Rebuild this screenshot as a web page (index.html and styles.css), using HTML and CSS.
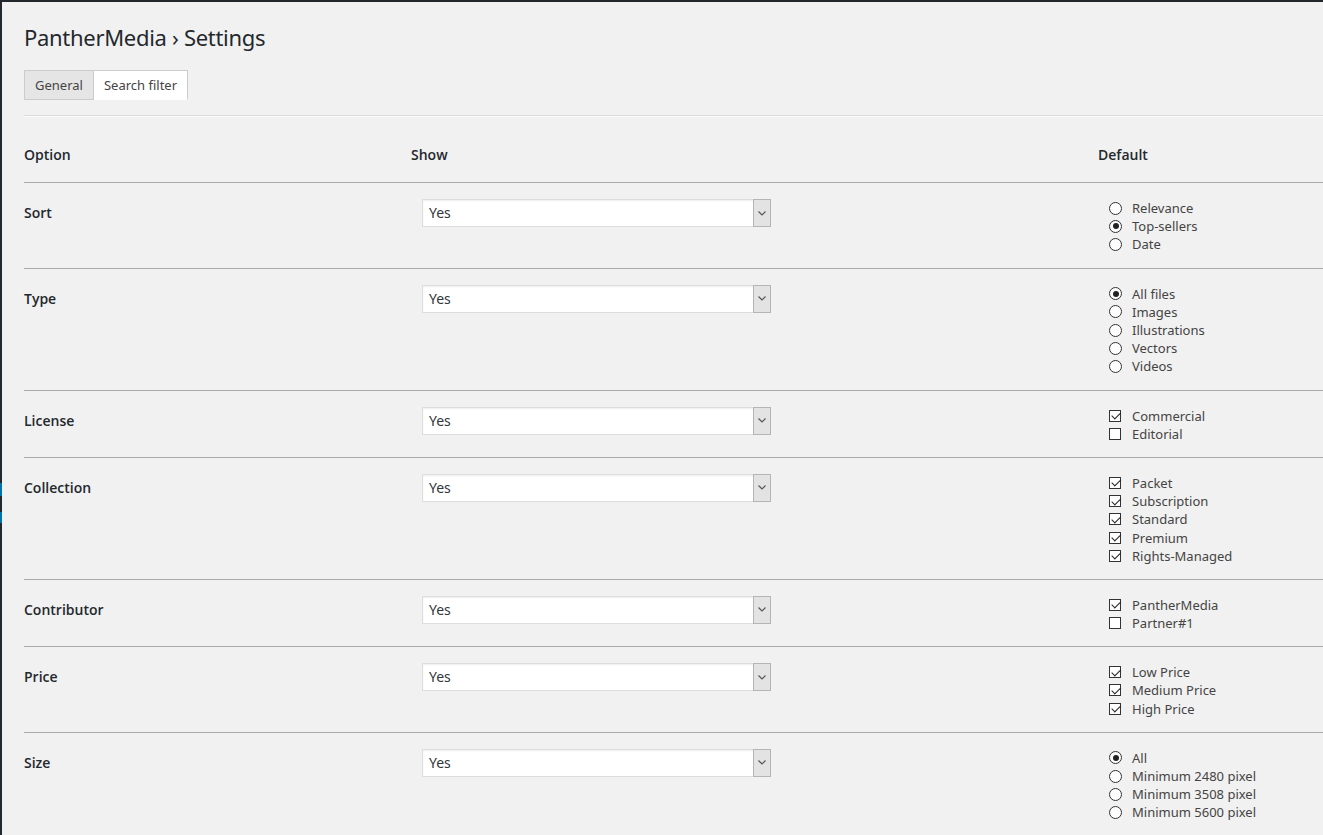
FILE: index.html
```html
<!DOCTYPE html>
<html lang="en">
<head>
  <meta charset="UTF-8" />
  <title>PantherMedia › Settings</title>
  <link rel="stylesheet" href="styles.css">
</head>
<body>

<div class="frame">
  <span class="edge-mark edge-mark-a"></span>
  <span class="edge-mark edge-mark-b"></span>

  <div class="wrap">
    <h1>PantherMedia › Settings</h1>

    <div class="tabs">
      <a class="tab" href="#">General</a>
      <a class="tab active" href="#">Search filter</a>
    </div>

    <table class="filters">
      <colgroup>
        <col class="col-option">
        <col class="col-show">
        <col>
      </colgroup>
      <thead>
        <tr>
          <th>Option</th>
          <th>Show</th>
          <th>Default</th>
        </tr>
      </thead>
      <tbody>
        <tr>
          <td class="label">Sort</td>
          <td class="show"><div class="select"><span>Yes</span><span class="select-arrow"><svg width="8" height="5" viewBox="0 0 8 5"><path d="M0.5 0.5 L4 4 L7.5 0.5" fill="none" stroke="#555" stroke-width="1.2"/></svg></span></div></td>
          <td class="defaults">
            <div class="choice"><span class="radio"></span>Relevance</div>
            <div class="choice"><span class="radio on"></span>Top-sellers</div>
            <div class="choice"><span class="radio"></span>Date</div>
          </td>
        </tr>
        <tr>
          <td class="label">Type</td>
          <td class="show"><div class="select"><span>Yes</span><span class="select-arrow"><svg width="8" height="5" viewBox="0 0 8 5"><path d="M0.5 0.5 L4 4 L7.5 0.5" fill="none" stroke="#555" stroke-width="1.2"/></svg></span></div></td>
          <td class="defaults">
            <div class="choice"><span class="radio on"></span>All files</div>
            <div class="choice"><span class="radio"></span>Images</div>
            <div class="choice"><span class="radio"></span>Illustrations</div>
            <div class="choice"><span class="radio"></span>Vectors</div>
            <div class="choice"><span class="radio"></span>Videos</div>
          </td>
        </tr>
        <tr>
          <td class="label">License</td>
          <td class="show"><div class="select"><span>Yes</span><span class="select-arrow"><svg width="8" height="5" viewBox="0 0 8 5"><path d="M0.5 0.5 L4 4 L7.5 0.5" fill="none" stroke="#555" stroke-width="1.2"/></svg></span></div></td>
          <td class="defaults">
            <div class="choice"><span class="check on"></span>Commercial</div>
            <div class="choice"><span class="check"></span>Editorial</div>
          </td>
        </tr>
        <tr>
          <td class="label">Collection</td>
          <td class="show"><div class="select"><span>Yes</span><span class="select-arrow"><svg width="8" height="5" viewBox="0 0 8 5"><path d="M0.5 0.5 L4 4 L7.5 0.5" fill="none" stroke="#555" stroke-width="1.2"/></svg></span></div></td>
          <td class="defaults">
            <div class="choice"><span class="check on"></span>Packet</div>
            <div class="choice"><span class="check on"></span>Subscription</div>
            <div class="choice"><span class="check on"></span>Standard</div>
            <div class="choice"><span class="check on"></span>Premium</div>
            <div class="choice"><span class="check on"></span>Rights-Managed</div>
          </td>
        </tr>
        <tr>
          <td class="label">Contributor</td>
          <td class="show"><div class="select"><span>Yes</span><span class="select-arrow"><svg width="8" height="5" viewBox="0 0 8 5"><path d="M0.5 0.5 L4 4 L7.5 0.5" fill="none" stroke="#555" stroke-width="1.2"/></svg></span></div></td>
          <td class="defaults">
            <div class="choice"><span class="check on"></span>PantherMedia</div>
            <div class="choice"><span class="check"></span>Partner#1</div>
          </td>
        </tr>
        <tr>
          <td class="label">Price</td>
          <td class="show"><div class="select"><span>Yes</span><span class="select-arrow"><svg width="8" height="5" viewBox="0 0 8 5"><path d="M0.5 0.5 L4 4 L7.5 0.5" fill="none" stroke="#555" stroke-width="1.2"/></svg></span></div></td>
          <td class="defaults">
            <div class="choice"><span class="check on"></span>Low Price</div>
            <div class="choice"><span class="check on"></span>Medium Price</div>
            <div class="choice"><span class="check on"></span>High Price</div>
          </td>
        </tr>
        <tr>
          <td class="label">Size</td>
          <td class="show"><div class="select"><span>Yes</span><span class="select-arrow"><svg width="8" height="5" viewBox="0 0 8 5"><path d="M0.5 0.5 L4 4 L7.5 0.5" fill="none" stroke="#555" stroke-width="1.2"/></svg></span></div></td>
          <td class="defaults">
            <div class="choice"><span class="radio on"></span>All</div>
            <div class="choice"><span class="radio"></span>Minimum 2480 pixel</div>
            <div class="choice"><span class="radio"></span>Minimum 3508 pixel</div>
            <div class="choice"><span class="radio"></span>Minimum 5600 pixel</div>
          </td>
        </tr>
      </tbody>
    </table>
  </div>
</div>

</body>
</html>
```

FILE: styles.css
```css
html, body {
  margin: 0;
  height: 100%;
  overflow: hidden;
}

body {
  font-family: 'Noto Sans', 'Open Sans', sans-serif;
  background: #f1f1f1;
  color: #23282d;
}

.frame {
  position: relative;
  min-height: 100%;
  border-top: 2px solid #23282d;
  border-left: 2px solid #23282d;
  box-sizing: border-box;
}

.edge-mark {
  position: absolute;
  left: -2px;
  width: 2px;
  background: #0073aa;
}

.edge-mark-a {
  top: 481px;
  height: 13px;
}

.edge-mark-b {
  top: 510px;
  height: 11px;
}

.wrap {
  padding: 21px 0 0 22px;
}

h1 {
  margin: 0;
  font-size: 22px;
  font-weight: 400;
  line-height: 29px;
  letter-spacing: -0.3px;
}

.tabs {
  display: flex;
  margin-top: 18px;
  padding-bottom: 15px;
  border-bottom: 1px solid #dcdcdc;
  box-shadow: 0 1px 0 #fafafa;
}

.tab {
  display: block;
  height: 28px;
  line-height: 28px;
  padding: 0 10px;
  font-size: 13px;
  color: #444;
  text-decoration: none;
  background: #e5e5e5;
  border: 1px solid #ccc;
}

.tab.active {
  background: #fff;
  border-left: none;
  border-bottom-color: #fff;
}

.filters {
  width: 1299px;
  margin-top: 14px;
  border-collapse: collapse;
  table-layout: fixed;
}

.col-option {
  width: 387px;
}

.col-show {
  width: 687px;
}

.filters th,
.filters td.label {
  font-family: 'Open Sans', 'Noto Sans', sans-serif;
  font-size: 14px;
  font-weight: 600;
}

.filters th {
  padding: 15px 0 18px;
  text-align: left;
  line-height: 19px;
  border-bottom: 1px solid #aaa;
}

.filters td {
  padding: 16px 0 14px;
  vertical-align: top;
  border-bottom: 1px solid #aaa;
}

.filters td.label {
  line-height: 28px;
}

.filters td.show,
.filters td.defaults {
  padding-left: 11px;
}

.select {
  display: flex;
  width: 349px;
  height: 28px;
  box-sizing: border-box;
  background: #fff;
  border: 1px solid #ddd;
  box-shadow: inset 0 1px 2px rgba(0,0,0,0.07);
}

.select span:first-child {
  flex: 1;
  padding-left: 6px;
  font-size: 14px;
  line-height: 26px;
  color: #32373c;
}

.select-arrow {
  display: flex;
  align-items: center;
  justify-content: center;
  width: 16px;
  margin: -1px -1px -1px 0;
  background: #e3e3e3;
  border: 1px solid #b5b5b5;
}

.choice {
  display: flex;
  align-items: center;
  height: 18.2px;
  font-size: 13px;
  color: #444;
}

.radio,
.check {
  flex: none;
  position: relative;
  width: 13px;
  height: 13px;
  margin-right: 10px;
  box-sizing: border-box;
  border: 1px solid #333;
  background: #fff;
}

.radio {
  border-radius: 50%;
}

.radio.on::after {
  content: '';
  position: absolute;
  top: 2.5px;
  left: 2.5px;
  width: 6px;
  height: 6px;
  border-radius: 50%;
  background: #222;
}

.check {
  width: 12px;
  height: 12px;
  margin-right: 11px;
}

.check.on::after {
  content: '';
  position: absolute;
  left: 3.5px;
  top: -0.5px;
  width: 3.5px;
  height: 7.5px;
  border-right: 1px solid #222;
  border-bottom: 1px solid #222;
  transform: rotate(45deg);
}
```
